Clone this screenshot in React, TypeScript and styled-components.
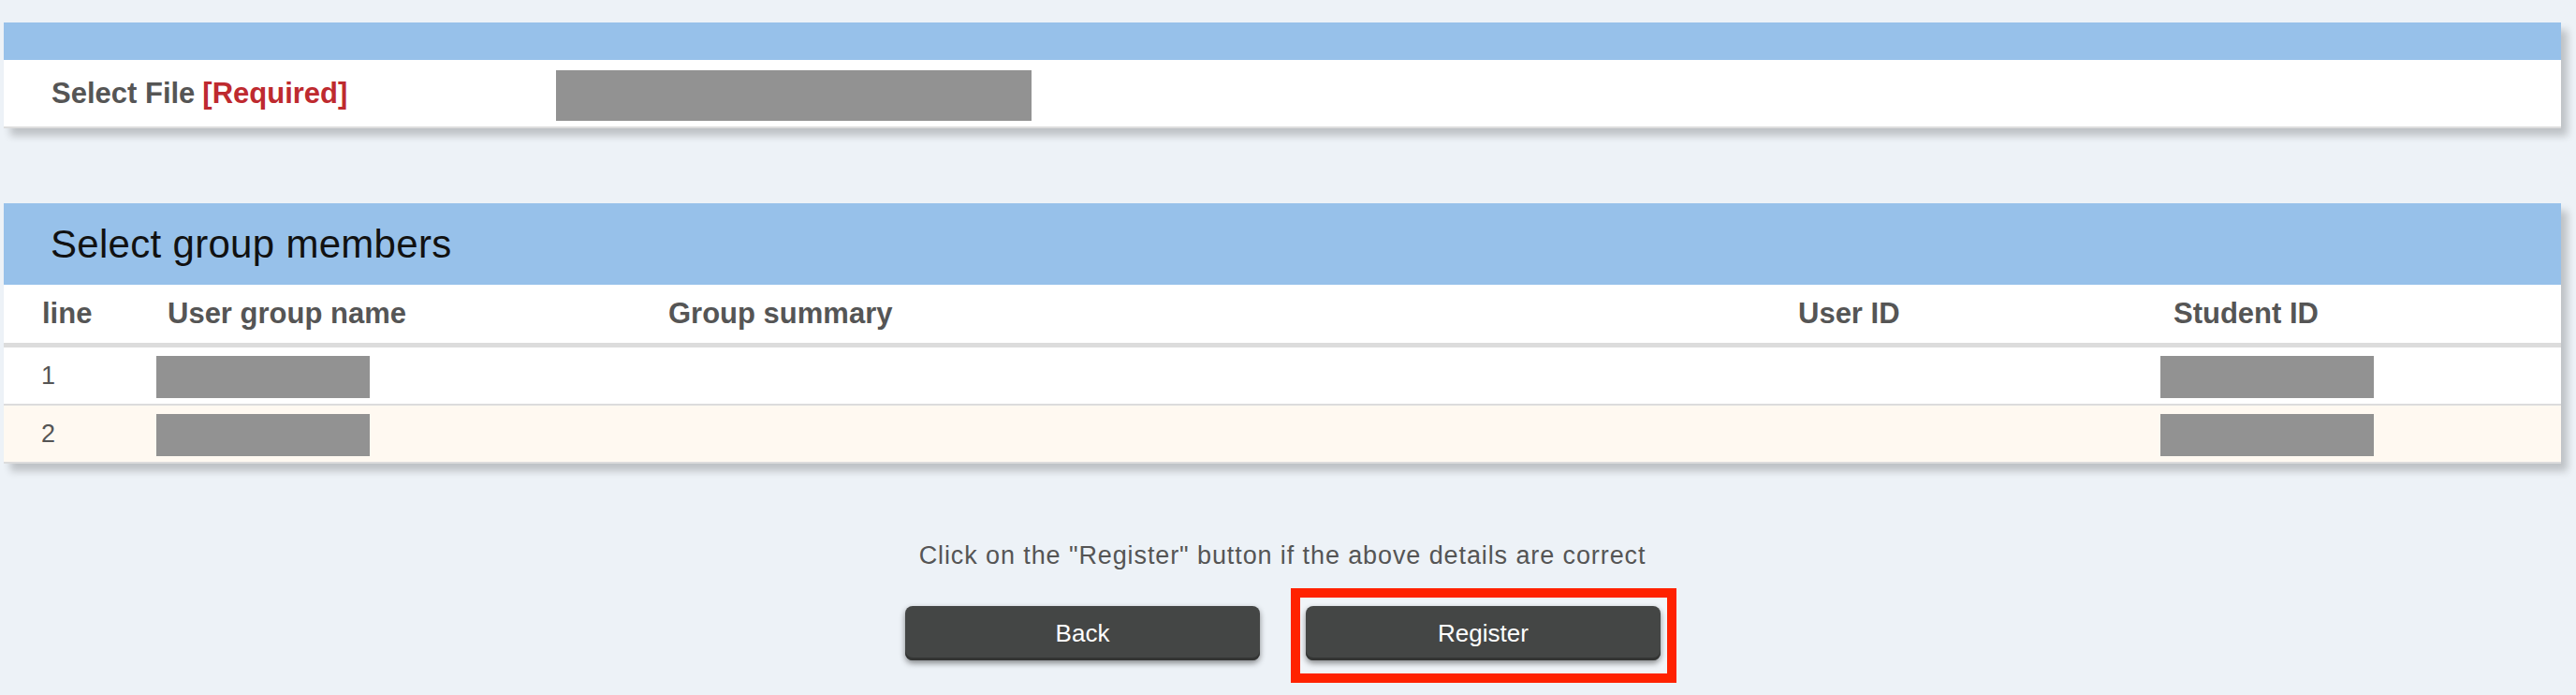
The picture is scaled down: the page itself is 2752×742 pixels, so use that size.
import React from "react";
import styled, { createGlobalStyle } from "styled-components";

const Global = createGlobalStyle`
  html, body { margin: 0; padding: 0; background: #edf2f7; }
  body { font-family: "Liberation Sans", Arial, sans-serif; }
  * { box-sizing: border-box; }
`;

const Page = styled.div`
  padding: 24px 16px 40px 4px;
  display: flex;
  flex-direction: column;
`;

const Panel = styled.section<{ $gap?: number }>`
  background: #ffffff;
  box-shadow: 7px 8px 8px rgba(0, 0, 0, 0.2);
  margin-bottom: ${(p) => p.$gap ?? 0}px;
`;

const BlueBar = styled.div<{ $h: number }>`
  height: ${(p) => p.$h}px;
  background: #97c1ea;
  display: flex;
  align-items: center;
  padding-left: 50px;
`;

const Title = styled.h2`
  margin: 0;
  font-weight: 400;
  font-size: 42px;
  color: #111111;
  letter-spacing: 0.3px;
`;

const FormRow = styled.div`
  display: grid;
  grid-template-columns: 590px 1fr;
  align-items: center;
  height: 73px;
  border-bottom: 2px solid #dddddd;
`;

const Label = styled.div`
  padding-left: 51px;
  font-size: 31px;
  font-weight: 700;
  color: #555555;
`;

const Required = styled.span`
  color: #be2a2f;
  margin-left: 8px;
`;

const Redact = styled.div<{ $w: number; $h: number; $top?: number }>`
  width: ${(p) => p.$w}px;
  height: ${(p) => p.$h}px;
  background: #929292;
  margin-top: ${(p) => p.$top ?? 0}px;
`;

const Table = styled.div`
  display: grid;
  grid-template-columns: 163px 535px 1207px 399px 1fr;
`;

const Cell = styled.div<{ $head?: boolean; $alt?: boolean; $pad?: number }>`
  height: ${(p) => (p.$head ? 67 : 62)}px;
  display: flex;
  align-items: center;
  padding-left: ${(p) => p.$pad ?? 0}px;
  background: ${(p) => (p.$alt ? "#fff9f1" : "#ffffff")};
  border-bottom: ${(p) => (p.$head ? 5 : 2)}px solid #dcdcdc;
  font-size: ${(p) => (p.$head ? 31 : 27)}px;
  font-weight: ${(p) => (p.$head ? 700 : 400)};
  color: #555555;
`;

const Note = styled.p`
  margin: 80px 0 0;
  text-align: center;
  font-size: 27px;
  letter-spacing: 0.9px;
  line-height: 36px;
  color: #555555;
`;

const Actions = styled.div`
  display: flex;
  justify-content: center;
  align-items: flex-start;
  gap: 43px;
  margin-top: 27px;
  padding-left: 8px;
`;

const Button = styled.button`
  width: 379px;
  height: 58px;
  border: none;
  border-radius: 8px;
  background: #444645;
  color: #ffffff;
  font-family: "Liberation Sans", Arial, sans-serif;
  font-size: 26px;
  box-shadow: inset 0 -3px 0 #333433, 0 3px 6px rgba(0, 0, 0, 0.45);
  cursor: pointer;
`;

const BackButton = styled(Button)`
  margin-top: 9px;
`;

const Highlight = styled.div`
  display: flex;
  padding: 9px 7px 14px 6px;
  outline: 10px solid #ff2200;
  background: #f1f5f9;
`;

const headers = [
  { t: "line", pad: 41 },
  { t: "User group name", pad: 12 },
  { t: "Group summary", pad: 12 },
  { t: "User ID", pad: 12 },
  { t: "Student ID", pad: 14 },
];

const rows = ["1", "2"];

export default function App() {
  return (
    <>
      <Global />
      <Page>
        <Panel $gap={80}>
          <BlueBar $h={40} />
          <FormRow>
            <Label>
              Select File<Required>[Required]</Required>
            </Label>
            <Redact $w={508} $h={54} $top={4} />
          </FormRow>
        </Panel>

        <Panel>
          <BlueBar $h={87}>
            <Title>Select group members</Title>
          </BlueBar>
          <Table>
            {headers.map((h) => (
              <Cell key={h.t} $head $pad={h.pad}>
                {h.t}
              </Cell>
            ))}
            {rows.map((r, i) => (
              <React.Fragment key={r}>
                <Cell $alt={i === 1} $pad={40}>{r}</Cell>
                <Cell $alt={i === 1}>
                  <Redact $w={228} $h={45} $top={2} />
                </Cell>
                <Cell $alt={i === 1} />
                <Cell $alt={i === 1} />
                <Cell $alt={i === 1}>
                  <Redact $w={228} $h={45} $top={2} />
                </Cell>
              </React.Fragment>
            ))}
          </Table>
        </Panel>

        <Note>Click on the "Register" button if the above details are correct</Note>
        <Actions>
          <BackButton>Back</BackButton>
          <Highlight>
            <Button>Register</Button>
          </Highlight>
        </Actions>
      </Page>
    </>
  );
}
